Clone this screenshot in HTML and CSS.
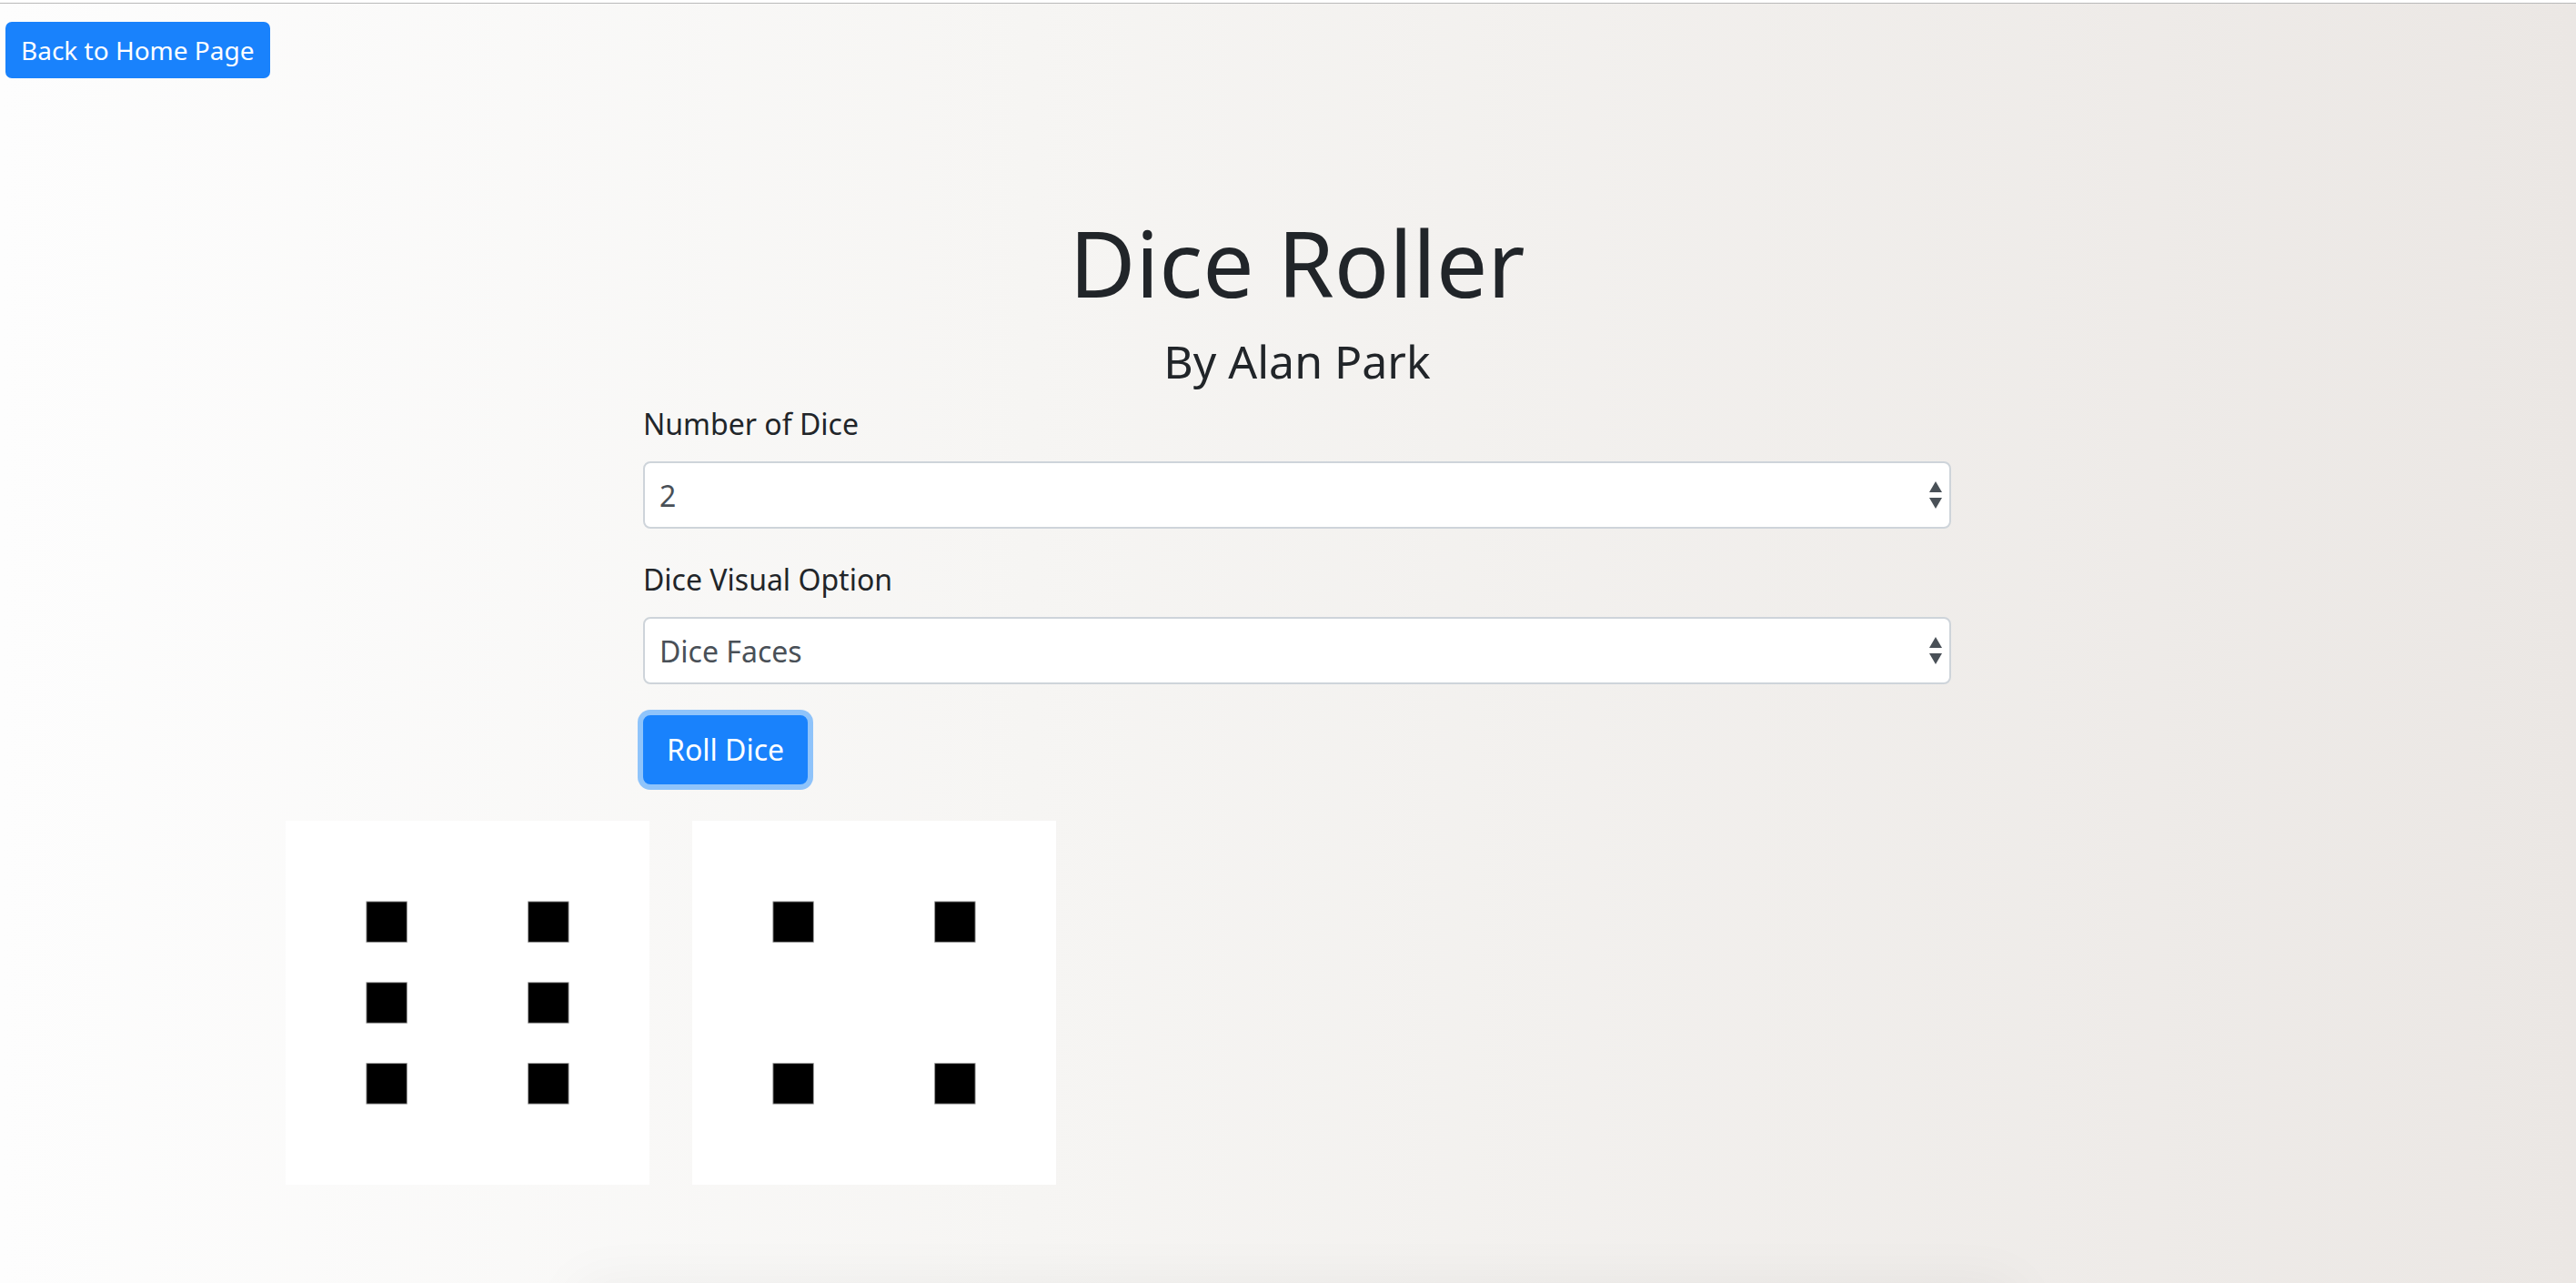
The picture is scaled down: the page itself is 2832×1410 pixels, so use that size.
FILE: index.html
```html
<!DOCTYPE html>
<html lang="en">
<head>
<meta charset="utf-8">
<title>Dice Roller</title>
<link rel="stylesheet" href="styles.css">
</head>
<body>
<div class="topline"></div>
<div class="page">
  <nav class="nav">
    <a class="btn btn-sm" href="#">Back to Home Page</a>
  </nav>

  <main class="main">
    <div class="panel">
      <h1 class="title">Dice Roller</h1>
      <h2 class="subtitle">By Alan Park</h2>

      <div class="form-group">
        <label class="label" for="num">Number of Dice</label>
        <div class="select-wrap">
          <select id="num" class="select">
            <option>2</option>
          </select>
          <svg class="arrows" width="14" height="30" viewBox="0 0 14 30" aria-hidden="true">
            <polygon points="0,12 7,0 14,12" fill="#495057"/>
            <polygon points="0,18 14,18 7,30" fill="#495057"/>
          </svg>
        </div>
      </div>

      <div class="form-group">
        <label class="label" for="vis">Dice Visual Option</label>
        <div class="select-wrap">
          <select id="vis" class="select">
            <option>Dice Faces</option>
          </select>
          <svg class="arrows" width="14" height="30" viewBox="0 0 14 30" aria-hidden="true">
            <polygon points="0,12 7,0 14,12" fill="#495057"/>
            <polygon points="0,18 14,18 7,30" fill="#495057"/>
          </svg>
        </div>
      </div>

      <button class="btn btn-roll" type="button">Roll Dice</button>
    </div>

    <div class="dice-row">
      <svg class="die" width="400" height="400" viewBox="0 0 9 9" aria-label="Die showing 6">
        <rect x="0" y="0" width="9" height="9" fill="#ffffff"/>
        <rect x="2" y="2" width="1" height="1" fill="#000" stroke="#9a9a9a" stroke-width="0.02"/>
        <rect x="6" y="2" width="1" height="1" fill="#000" stroke="#9a9a9a" stroke-width="0.02"/>
        <rect x="2" y="4" width="1" height="1" fill="#000" stroke="#9a9a9a" stroke-width="0.02"/>
        <rect x="6" y="4" width="1" height="1" fill="#000" stroke="#9a9a9a" stroke-width="0.02"/>
        <rect x="2" y="6" width="1" height="1" fill="#000" stroke="#9a9a9a" stroke-width="0.02"/>
        <rect x="6" y="6" width="1" height="1" fill="#000" stroke="#9a9a9a" stroke-width="0.02"/>
      </svg>
      <svg class="die" width="400" height="400" viewBox="0 0 9 9" aria-label="Die showing 4">
        <rect x="0" y="0" width="9" height="9" fill="#ffffff"/>
        <rect x="2" y="2" width="1" height="1" fill="#000" stroke="#9a9a9a" stroke-width="0.02"/>
        <rect x="6" y="2" width="1" height="1" fill="#000" stroke="#9a9a9a" stroke-width="0.02"/>
        <rect x="2" y="6" width="1" height="1" fill="#000" stroke="#9a9a9a" stroke-width="0.02"/>
        <rect x="6" y="6" width="1" height="1" fill="#000" stroke="#9a9a9a" stroke-width="0.02"/>
      </svg>
    </div>

    <div class="below"></div>
  </main>
</div>
</body>
</html>
```

FILE: styles.css
```css
html, body {
  margin: 0;
  padding: 0;
}

body {
  min-height: 1410px;
  background: linear-gradient(to right, #fdfdfd 0%, #f6f5f3 40%, #ebe7e4 100%);
  font-family: "Noto Sans", "Open Sans", sans-serif;
  color: #212529;
  overflow: hidden;
}

.topline {
  height: 3px;
  background: #ffffff;
  border-bottom: 1px solid #b9b9b9;
}

.page {
  display: flex;
  flex-direction: column;
}

.nav {
  display: flex;
  padding: 20px 0 0 6px;
}

.btn {
  display: inline-block;
  box-sizing: border-box;
  background: #1982fc;
  color: #ffffff;
  border: 2px solid #1982fc;
  text-decoration: none;
  font-family: "Noto Sans", "Open Sans", sans-serif;
  cursor: pointer;
}

.btn-sm {
  font-size: 28px;
  line-height: 42px;
  padding: 8px 15px;
  border-radius: 7px;
}

.main {
  display: flex;
  flex-direction: column;
  margin-top: 141px;
}

.panel {
  box-sizing: border-box;
  width: 1438px;
  margin: 0 0 0 707px;
  display: flex;
  flex-direction: column;
  align-items: flex-start;
}

.title {
  align-self: stretch;
  margin: 0;
  text-align: center;
  font-size: 100px;
  line-height: 122px;
  font-weight: 400;
  color: #212529;
}

.subtitle {
  align-self: stretch;
  margin: 19px 0 0;
  text-align: center;
  font-size: 50px;
  line-height: 58px;
  font-weight: 400;
  color: #212529;
}

.form-group {
  align-self: stretch;
  display: flex;
  flex-direction: column;
  align-items: flex-start;
  margin-top: 16px;
}

.form-group + .form-group {
  margin-top: 32px;
}

.label {
  font-size: 32px;
  line-height: 48px;
  margin-bottom: 17px;
  color: #212529;
}

.select-wrap {
  position: relative;
  align-self: stretch;
}

.select {
  display: block;
  box-sizing: border-box;
  width: 100%;
  height: 74px;
  margin: 0;
  padding: 0 60px 0 16px;
  font-family: "Noto Sans", "Open Sans", sans-serif;
  font-size: 32px;
  color: #495057;
  background: #ffffff;
  border: 2px solid #ced4da;
  border-radius: 8px;
  -webkit-appearance: none;
  appearance: none;
  outline: none;
}

.arrows {
  position: absolute;
  right: 10px;
  top: 22px;
  pointer-events: none;
}

.btn-roll {
  margin-top: 34px;
  font-size: 32px;
  line-height: 48px;
  padding: 12px 24px;
  border-radius: 8px;
  box-shadow: 0 0 0 6px rgba(38, 143, 255, 0.5);
}

.dice-row {
  display: flex;
  gap: 47px;
  padding-left: 314px;
  margin-top: 40px;
}

.die {
  display: block;
  flex: none;
}

.below {
  width: 1560px;
  height: 200px;
  margin: 120px 0 0 646px;
  background: #f0eeec;
  box-shadow: 0 0 60px 10px rgba(0, 0, 0, 0.05);
}
```
